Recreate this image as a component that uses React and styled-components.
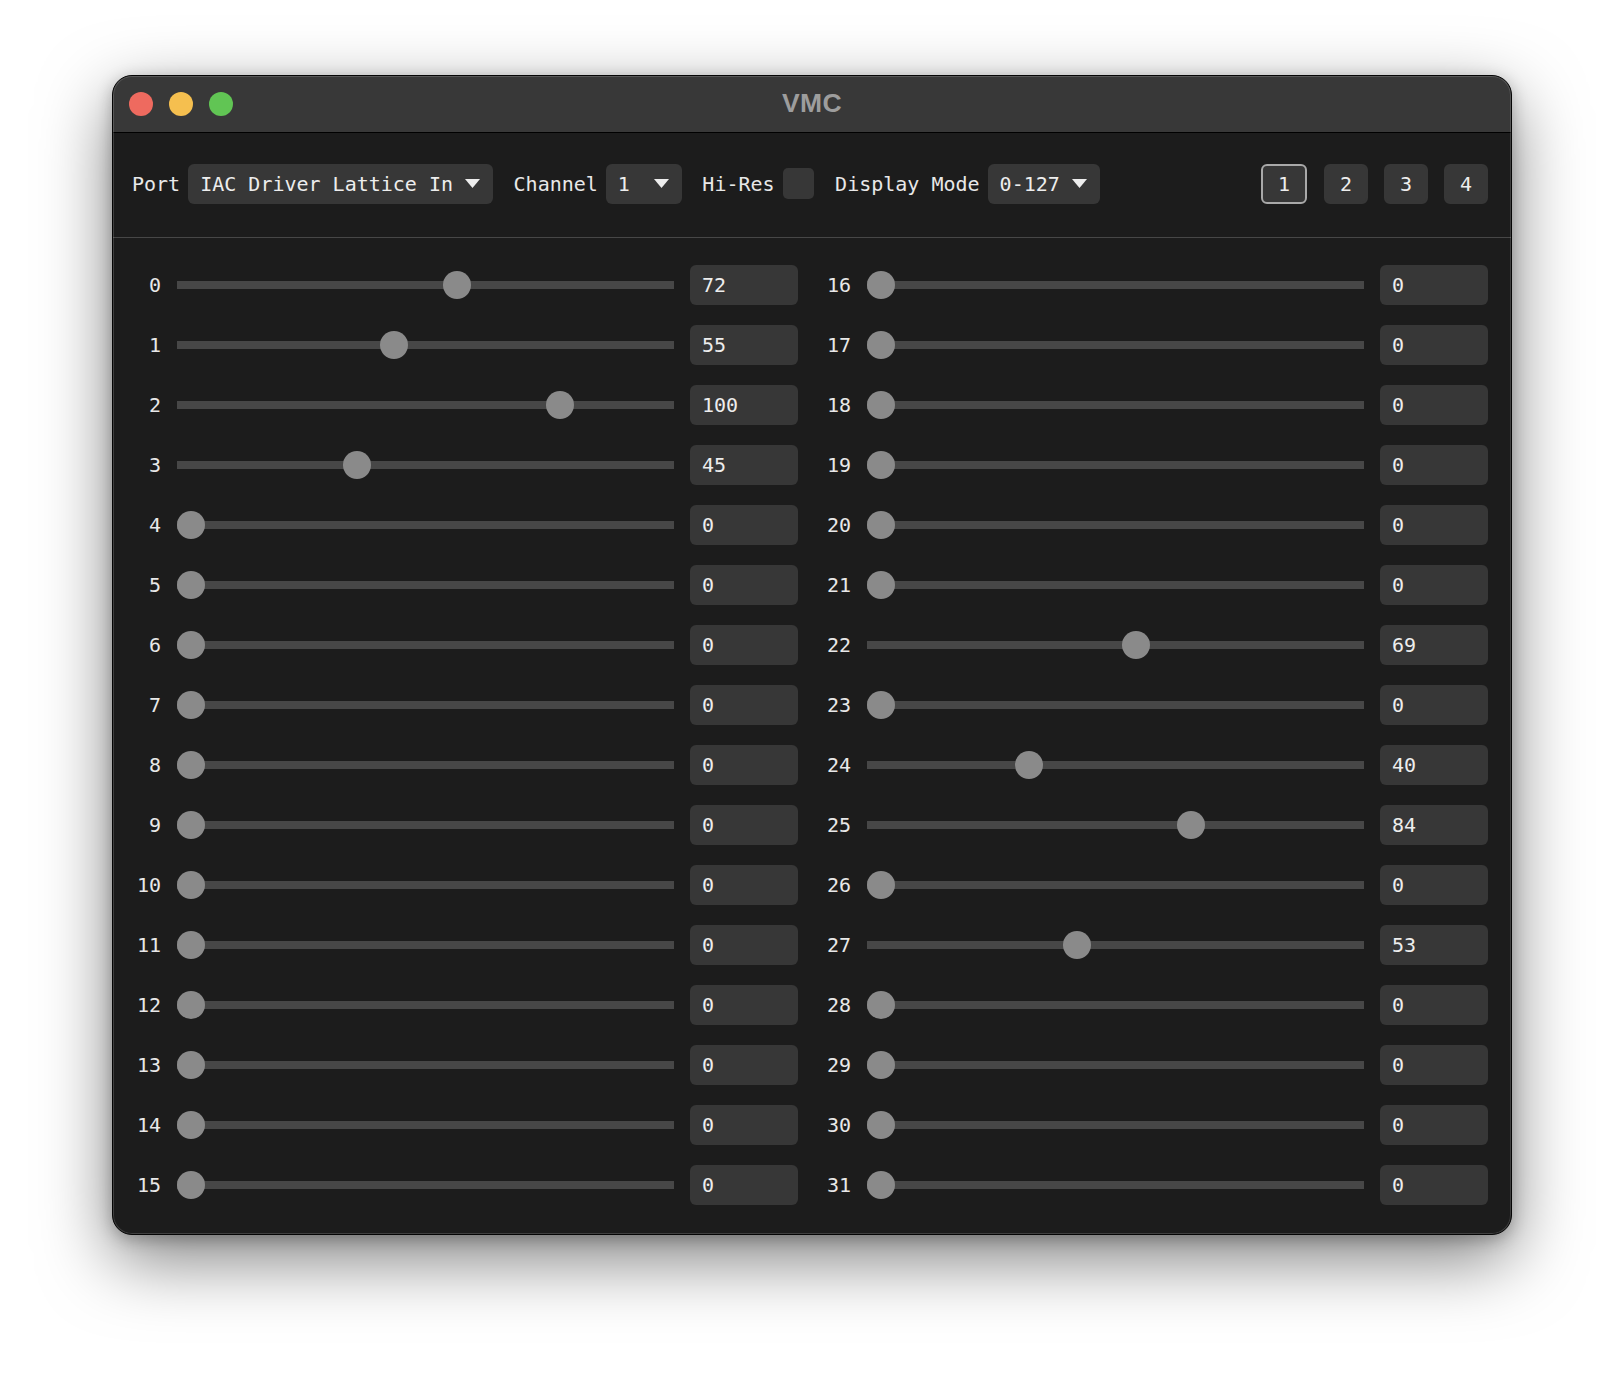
import React, { useState } from "react";
import styled, { createGlobalStyle } from "styled-components";

const MONO = `"DejaVu Sans Mono", "Liberation Mono", monospace`;

const GlobalStyle = createGlobalStyle`
  html, body { margin: 0; padding: 0; background: #ffffff; }
  * { box-sizing: border-box; }
`;

const Page = styled.div`
  padding: 75px 112px 149px;
  background: #ffffff;
`;

const Window = styled.div`
  position: relative;
  width: 1400px;
  height: 1160px;
  border-radius: 20px;
  overflow: hidden;
  background: #1c1c1c;
  border: 1px solid #050505;
  box-shadow: 0 24px 70px rgba(0, 0, 0, 0.5), 0 4px 16px rgba(0, 0, 0, 0.25);
  display: flex;
  flex-direction: column;

  &::after {
    content: "";
    position: absolute;
    inset: 0;
    border-radius: 19px;
    box-shadow: inset 0 0 0 1px rgba(255, 255, 255, 0.16);
    pointer-events: none;
  }
`;

const TitleBar = styled.div`
  height: 57px;
  flex: none;
  background: #383838;
  border-bottom: 1px solid #000;
  display: grid;
  grid-template-columns: 1fr auto 1fr;
  align-items: center;
  padding: 0 16px 1px;
`;

const Lights = styled.div`
  display: flex;
  gap: 16px;
`;

const Light = styled.span`
  width: 24px;
  height: 24px;
  border-radius: 50%;
  background: ${(p) => p.$color};
`;

const Title = styled.div`
  font-family: "Liberation Sans", Arial, sans-serif;
  font-weight: 700;
  font-size: 26.5px;
  color: #9d9d9d;
  letter-spacing: 0.3px;
`;

const Toolbar = styled.div`
  height: 105px;
  flex: none;
  display: flex;
  align-items: center;
  gap: 20.5px;
  padding: 0 23px 3px 19px;
  border-bottom: 1px solid #474747;
  font-family: ${MONO};
  font-size: 20px;
  color: #e8e8e8;
`;

const Field = styled.div`
  display: flex;
  align-items: center;
  gap: 8px;
`;

const Label = styled.span`
  white-space: nowrap;
`;

const Select = styled.div`
  height: 40px;
  display: flex;
  align-items: center;
  gap: 12px;
  padding: 0 13px 0 12px;
  background: #373737;
  border-radius: 6px;
  color: #ededed;
  white-space: nowrap;
  cursor: pointer;
`;

const SelectText = styled.span`
  min-width: ${(p) => p.$chars * 12}px;
`;

const Arrow = () => (
  <svg width="15" height="9" viewBox="0 0 15 9" aria-hidden="true">
    <path d="M0 0 H15 L7.5 9 Z" fill="#ededed" />
  </svg>
);

const Checkbox = styled.span`
  width: 31px;
  height: 31px;
  border-radius: 5px;
  background: #373737;
  margin-right: 1px;
`;

const Pages = styled.div`
  margin-left: auto;
  display: flex;
  gap: 16px;
`;

const PageButton = styled.button`
  width: ${(p) => (p.$active ? 46 : 44)}px;
  margin-right: ${(p) => (p.$active ? 1 : 0)}px;
  height: 40px;
  padding: 0;
  border-radius: 6px;
  background: #373737;
  border: 2px solid ${(p) => (p.$active ? "#a9a9a9" : "#373737")};
  color: #ededed;
  font-family: ${MONO};
  font-size: 20px;
  cursor: pointer;
`;

const Grid = styled.div`
  flex: 1;
  display: grid;
  grid-template-columns: 1fr 1fr;
  grid-template-rows: repeat(16, 40px);
  grid-auto-flow: column;
  column-gap: 29px;
  row-gap: 20px;
  padding: 27px 23px 29px 24px;
`;

const Row = styled.div`
  display: grid;
  grid-template-columns: 24px 1fr 108px;
  column-gap: 16px;
  align-items: center;
  font-family: ${MONO};
  font-size: 20px;
  color: #e8e8e8;
`;

const RowLabel = styled.span`
  text-align: right;
  white-space: nowrap;
`;

const Range = styled.input.attrs({ type: "range", min: 0, max: 127 })`
  -webkit-appearance: none;
  appearance: none;
  width: 100%;
  height: 28px;
  margin: 0;
  padding: 0;
  background: transparent;
  outline: none;

  &::-webkit-slider-runnable-track {
    height: 8px;
    background: #474747;
    border: none;
  }
  &::-webkit-slider-thumb {
    -webkit-appearance: none;
    appearance: none;
    width: 28px;
    height: 28px;
    border-radius: 50%;
    background: #8a8a8a;
    border: none;
    margin-top: -10px;
  }
`;

const ValueBox = styled.div`
  height: 40px;
  display: flex;
  align-items: center;
  padding: 0 12px;
  background: #373737;
  border-radius: 6px;
  color: #ededed;
`;

const initial = Array.from({ length: 32 }, () => 0);
Object.entries({ 0: 72, 1: 55, 2: 100, 3: 45, 22: 69, 24: 40, 25: 84, 27: 53 }).forEach(
  ([k, v]) => {
    initial[Number(k)] = v;
  }
);

export default function App() {
  const [values, setValues] = useState(initial);
  const [page, setPage] = useState(1);

  const setValue = (i, v) =>
    setValues((prev) => prev.map((x, j) => (j === i ? v : x)));

  return (
    <Page>
      <GlobalStyle />
      <Window>
        <TitleBar>
          <Lights>
            <Light $color="#ee6a5f" />
            <Light $color="#f5bf4f" />
            <Light $color="#61c554" />
          </Lights>
          <Title>VMC</Title>
          <span />
        </TitleBar>
        <Toolbar>
          <Field>
            <Label>Port</Label>
            <Select>
              <SelectText $chars={21}>IAC Driver Lattice In</SelectText>
              <Arrow />
            </Select>
          </Field>
          <Field>
            <Label>Channel</Label>
            <Select>
              <SelectText $chars={2}>1</SelectText>
              <Arrow />
            </Select>
          </Field>
          <Field>
            <Label>Hi-Res</Label>
            <Checkbox />
          </Field>
          <Field>
            <Label>Display Mode</Label>
            <Select>
              <SelectText $chars={5}>0-127</SelectText>
              <Arrow />
            </Select>
          </Field>
          <Pages>
            {[1, 2, 3, 4].map((n) => (
              <PageButton key={n} $active={n === page} onClick={() => setPage(n)}>
                {n}
              </PageButton>
            ))}
          </Pages>
        </Toolbar>
        <Grid>
          {values.map((v, i) => (
            <Row key={i}>
              <RowLabel>{i}</RowLabel>
              <Range
                value={v}
                onChange={(e) => setValue(i, Number(e.target.value))}
              />
              <ValueBox>{v}</ValueBox>
            </Row>
          ))}
        </Grid>
      </Window>
    </Page>
  );
}
